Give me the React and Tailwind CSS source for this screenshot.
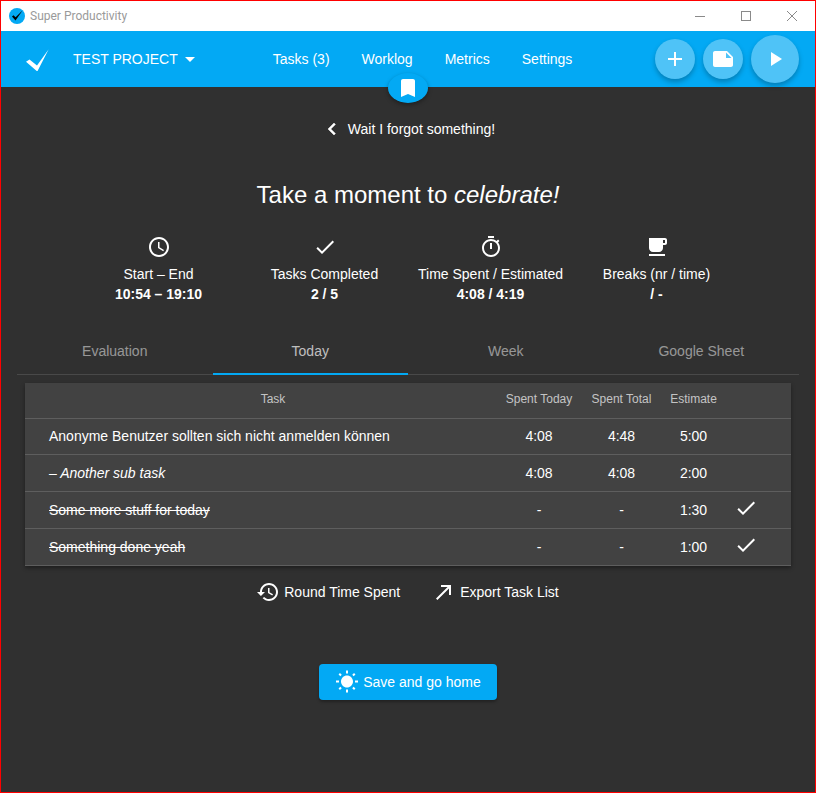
const ICONS = {
  clock: 'M11.99 2C6.47 2 2 6.48 2 12s4.47 10 9.99 10C17.52 22 22 17.52 22 12S17.52 2 11.99 2zM12 20c-4.42 0-8-3.58-8-8s3.58-8 8-8 8 3.58 8 8-3.58 8-8 8zm.5-13H11v6l5.25 3.15.75-1.23-4.5-2.67z',
  check: 'M9 16.17L4.83 12l-1.42 1.41L9 19 21 7l-1.41-1.41z',
  timer: 'M15 1H9v2h6V1zm-4 13h2V8h-2v6zm8.03-6.61l1.42-1.42c-.43-.51-.9-.99-1.41-1.41l-1.42 1.42C16.07 4.74 14.12 4 12 4c-4.97 0-9 4.03-9 9s4.02 9 9 9 9-4.03 9-9c0-2.12-.74-4.07-1.97-5.61zM12 20c-3.87 0-7-3.13-7-7s3.13-7 7-7 7 3.13 7 7-3.13 7-7 7z',
  coffee: 'M20 3H4v10c0 2.21 1.79 4 4 4h6c2.21 0 4-1.79 4-4v-3h2c1.11 0 2-.89 2-2V5c0-1.11-.89-2-2-2zm0 5h-2V5h2v3zM4 19h16v2H4z',
  history: 'M13 3c-4.97 0-9 4.03-9 9H1l3.89 3.89.07.14L9 12H6c0-3.87 3.13-7 7-7s7 3.13 7 7-3.13 7-7 7c-1.93 0-3.68-.79-4.94-2.06l-1.42 1.42C8.27 19.99 10.51 21 13 21c4.97 0 9-4.03 9-9s-4.03-9-9-9zm-1 5v5l4.28 2.54.72-1.21-3.5-2.08V8H12z',
  callMade: 'M9 5v2h6.59L4 18.59 5.41 20 17 8.41V15h2V5z',
  sun: 'M6.76 4.84l-1.8-1.79-1.41 1.41 1.79 1.79 1.42-1.41zM4 10.5H1v2h3v-2zm9-9.95h-2V3.5h2V.55zm7.45 3.91l-1.41-1.41-1.79 1.79 1.41 1.41 1.79-1.79zm-3.21 13.7l1.79 1.8 1.41-1.41-1.8-1.79-1.4 1.4zM20 10.5v2h3v-2h-3zm-8-5c-3.31 0-6 2.69-6 6s2.69 6 6 6 6-2.69 6-6-2.69-6-6-6zm-1 16.95h2V19.5h-2v2.95zm-7.45-3.91l1.41 1.41 1.79-1.8-1.41-1.41-1.79 1.8z',
  bookmark: 'M17 3H7c-1.1 0-1.99.9-1.99 2L5 21l7-3 7 3V5c0-1.1-.9-2-2-2z',
  note: 'M22 10l-6-6H4c-1.1 0-2 .9-2 2v12.01c0 1.1.9 1.99 2 1.99l16-.01c1.1 0 2-.89 2-1.99v-8zm-7-4.5l5.5 5.5H15V5.5z',
  add: 'M19 13h-6v6h-2v-6H5v-2h6V5h2v6h6v2z',
  play: 'M8 5v14l11-7z',
  chevron: 'M15.41 7.41L14 6l-6 6 6 6 1.41-1.41L10.83 12z',
  caret: 'M7 10l5 5 5-5z',
};

function Icon({ name, className = 'w-6 h-6' }) {
  return (
    <svg className={className} viewBox="0 0 24 24" fill="currentColor">
      <path d={ICONS[name]} />
    </svg>
  );
}

const stats = [
  { icon: 'clock', label: 'Start – End', value: '10:54 – 19:10' },
  { icon: 'check', label: 'Tasks Completed', value: '2 / 5' },
  { icon: 'timer', label: 'Time Spent / Estimated', value: '4:08 / 4:19' },
  { icon: 'coffee', label: 'Breaks (nr / time)', value: '/ -' },
];

const rows = [
  { title: 'Anonyme Benutzer sollten sich nicht anmelden können', today: '4:08', total: '4:48', estimate: '5:00' },
  { title: '– Another sub task', today: '4:08', total: '4:08', estimate: '2:00', sub: true },
  { title: 'Some more stuff for today', today: '-', total: '-', estimate: '1:30', done: true },
  { title: 'Something done yeah', today: '-', total: '-', estimate: '1:00', done: true },
];

function TitleBar() {
  return (
    <div className="h-[30px] bg-white flex items-center justify-between">
      <div className="flex items-center pl-2">
        <svg className="w-4 h-4" viewBox="0 0 16 16">
          <circle cx="8" cy="8" r="8" fill="#03a9f4" />
          <path d="M3 8.5L6.5 12.5L13.5 2.5L6.6 9.2L4.4 7.2z" fill="#000" />
        </svg>
        <span className="ml-[5px] text-xs text-[#9a9a9a] font-['Roboto',sans-serif]">Super Productivity</span>
      </div>
      <div className="flex text-[#8a8a8a]">
        <div className="w-[46px] h-[30px] flex items-center justify-center">
          <div className="w-[10px] h-px bg-[#8a8a8a]" />
        </div>
        <div className="w-[46px] h-[30px] flex items-center justify-center">
          <div className="w-[10px] h-[10px] border border-[#8a8a8a]" />
        </div>
        <div className="w-[46px] h-[30px] flex items-center justify-center">
          <svg className="w-[10px] h-[10px]" viewBox="0 0 10 10" stroke="currentColor" strokeWidth="1">
            <path d="M0 0L10 10M10 0L0 10" />
          </svg>
        </div>
      </div>
    </div>
  );
}

function Header() {
  return (
    <div className="relative h-14 bg-[#03a9f4] text-white flex items-center pl-6 pr-4 z-10">
      <svg className="w-6 h-6 shrink-0" viewBox="0 0 24 24" fill="#fff">
        <path d="M1 14.7L12.3 24.5L23.7 2.3L12 18.5L4.5 12.5z" />
      </svg>
      <button className="ml-6 flex items-center text-sm -mt-[1px]">
        TEST PROJECT
        <Icon name="caret" className="w-6 h-6 -mr-[2px]" />
      </button>
      <nav className="ml-[73px] flex gap-8 text-sm">
        <span>Tasks (3)</span>
        <span>Worklog</span>
        <span>Metrics</span>
        <span>Settings</span>
      </nav>
      <div className="ml-auto flex items-center gap-2">
        <div className="w-10 h-10 rounded-full bg-[#4fc3f7] flex items-center justify-center shadow-[0_3px_5px_rgba(0,0,0,0.25)]">
          <Icon name="add" />
        </div>
        <div className="w-10 h-10 rounded-full bg-[#4fc3f7] flex items-center justify-center shadow-[0_3px_5px_rgba(0,0,0,0.25)]">
          <Icon name="note" />
        </div>
        <div className="w-12 h-12 rounded-full bg-[#4fc3f7] flex items-center justify-center shadow-[0_3px_5px_rgba(0,0,0,0.25)]">
          <Icon name="play" />
        </div>
      </div>
      <div className="absolute left-[387px] top-[42px] w-10 h-[30px] rounded-[50%] bg-[#03a9f4] flex items-center justify-center shadow-[0_2px_4px_rgba(0,0,0,0.35)]">
        <Icon name="bookmark" />
      </div>
    </div>
  );
}

function Stat({ icon, label, value }) {
  return (
    <div className="w-[166px] flex flex-col items-center text-sm">
      <Icon name={icon} />
      <div className="mt-[5px] leading-[20px]">{label}</div>
      <div className="font-bold leading-[20px]">{value}</div>
    </div>
  );
}

const gridCols = 'grid grid-cols-[472px_84px_81px_63px_42px_1fr] items-center';

function TaskTable() {
  return (
    <div className="mt-[8px] mx-6 bg-[#424242] border-b border-white/15 shadow-[0_2px_4px_rgba(0,0,0,0.4)]">
      <div className={`${gridCols} h-[35px] pb-1 text-xs text-white/70 text-center`}>
        <div className="pl-6">Task</div>
        <div>Spent Today</div>
        <div>Spent Total</div>
        <div>Estimate</div>
      </div>
      {rows.map((row, i) => (
        <div key={row.title} className={`${gridCols} ${i === 0 ? 'h-9 pb-px' : 'h-[37px]'} border-t border-white/15 text-sm text-center`}>
          <div className={`pl-6 text-left whitespace-nowrap ${row.sub ? 'italic' : ''} ${row.done ? 'line-through' : ''}`}>{row.title}</div>
          <div>{row.today}</div>
          <div>{row.total}</div>
          <div>{row.estimate}</div>
          <div className="flex justify-center -mt-[4px]">
            {row.done && <Icon name="check" />}
          </div>
        </div>
      ))}
    </div>
  );
}

export default function App() {
  const tabs = ['Evaluation', 'Today', 'Week', 'Google Sheet'];

  return (
    <div className="h-[793px] border border-[#ff0000] bg-[#303030] text-white font-['Liberation_Sans',Arial,sans-serif] overflow-hidden">
      <TitleBar />
      <Header />

      <div className="flex items-center justify-center mt-[30px] h-6 text-sm">
        <Icon name="chevron" className="w-6 h-6 -ml-[1px] stroke-current stroke-[0.5]" />
        <span className="ml-[4px]">Wait I forgot something!</span>
      </div>

      <h1 className="mt-[38px] text-2xl leading-[32px] text-center">
        Take a moment to <em>celebrate!</em>
      </h1>

      <div className="mt-[24px] flex justify-center">
        <div className="flex -ml-[1px]">
          {stats.map((s) => <Stat key={s.label} {...s} />)}
        </div>
      </div>

      <div className="mt-[25px] mx-4 flex border-b border-white/12">
        {tabs.map((tab) => (
          <div
            key={tab}
            className={`relative flex-1 h-[45px] pb-[2px] flex items-center justify-center text-sm ${tab === 'Today' ? 'text-white/70' : 'text-white/50'}`}
          >
            {tab}
            {tab === 'Today' && <div className="absolute left-0 right-0 -bottom-px h-[2px] bg-[#03a9f4]" />}
          </div>
        ))}
      </div>

      <TaskTable />

      <div className="mt-[14px] flex justify-center gap-[32px] text-sm -ml-[1px]">
        <button className="flex items-center gap-[4px]">
          <Icon name="history" />
          Round Time Spent
        </button>
        <button className="flex items-center gap-[4px]">
          <Icon name="callMade" />
          Export Task List
        </button>
      </div>

      <div className="mt-[60px] flex justify-center">
        <button className="w-[178px] h-9 rounded bg-[#03a9f4] flex items-center justify-center gap-[4px] text-sm shadow-[0_2px_3px_rgba(0,0,0,0.3)]">
          <Icon name="sun" />
          Save and go home
        </button>
      </div>
    </div>
  );
}
